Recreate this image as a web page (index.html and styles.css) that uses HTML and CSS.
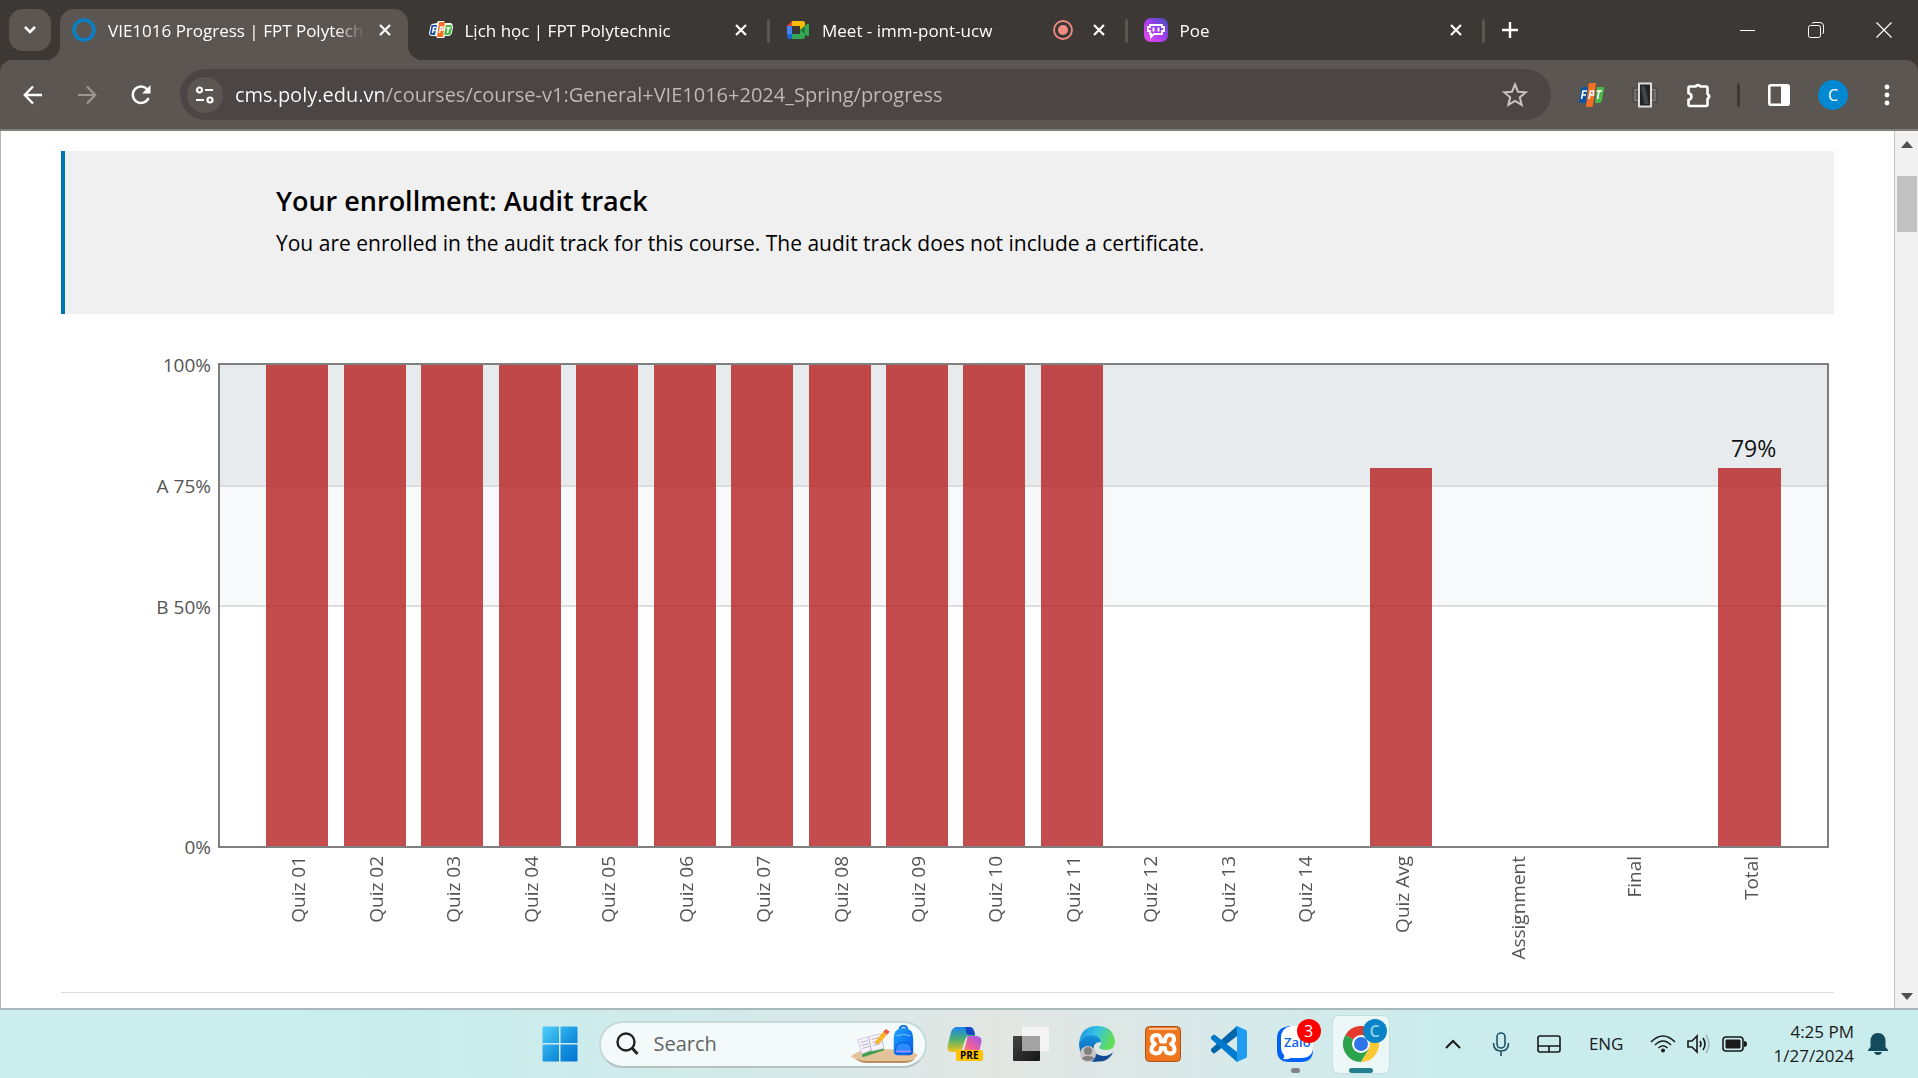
FILE: index.html
```html
<!DOCTYPE html>
<html lang="en">
<head>
<meta charset="utf-8">
<meta name="viewport" content="width=device-width, initial-scale=1">
<title>VIE1016 Progress | FPT Polytechnic</title>
<link rel="stylesheet" href="styles.css">
</head>
<body>
<header class="browser">
  <div class="tabstrip">
    <button class="tab-search" aria-label="Search tabs"><svg width="14" height="10" viewBox="0 0 14 10"><path d="M2 2l5 5 5-5" fill="none" stroke="#fff" stroke-width="2.6"/></svg></button>
    <div class="tabs">
      <div class="tab tab-active">
        <svg class="favicon" viewBox="0 0 24 24"><circle cx="12" cy="12" r="10" fill="none" stroke="#0a7fc2" stroke-width="3.6"/></svg>
        <span class="tab-title">VIE1016 Progress | FPT Polytechnic</span>
        <button class="tab-close" aria-label="Close tab"><svg width="14" height="14" viewBox="0 0 14 14"><path d="M2 2l10 10M12 2L2 12" stroke="#fff" stroke-width="2.2"/></svg></button>
      </div>
      <div class="tab">
        <svg class="favicon" viewBox="0 0 24 24"><path d="M3 6l5-1 1-2h6l1 2h6q2 1 2 4l-1 6q-1 3-3 3h-4l-1 2H8l-1-2H3q-3 0-3-3l1-5q0-3 2-4z" fill="#fff"/><path d="M3 7h5l-2 10H2q-1 0-1-2l1-5q0-3 1-3z" fill="#1b4fa3"/><path d="M10 4h6l-2 15H8z" fill="#f36f21"/><path d="M17 7h5q1 0 1 3l-1 5q0 2-2 2h-5z" fill="#4cb848"/><path d="M3.500 15l1-5.500h2.500M4 12.500h2.500M10.500 15l1-6h2.500v3h-2.500M17.500 10h4M19.500 10l-1 5" fill="none" stroke="#fff" stroke-width="1.300"/></svg>
        <span class="tab-title">Lịch học | FPT Polytechnic</span>
        <button class="tab-close" aria-label="Close tab"><svg width="14" height="14" viewBox="0 0 14 14"><path d="M2 2l10 10M12 2L2 12" stroke="#fff" stroke-width="2.2"/></svg></button>
      </div>
      <div class="tab">
        <svg class="favicon" viewBox="0 0 24 24"><path d="M6 3v5H1z" fill="#ea4335"/><path d="M6 3h11q2 0 2 2v4l-5 4V8H6z" fill="#fbbc04"/><path d="M1 8h5v8H1z" fill="#4285f4"/><path d="M1 16h5v5H3q-2 0-2-2z" fill="#1967d2"/><path d="M6 16h8v-4l5 3v4q0 2-2 2H6z" fill="#34a853"/><path d="M14 12l7-6q2-1 2 1v10q0 2-2 1z" fill="#34a853"/><path d="M14 12l5-4v8z" fill="#188038"/></svg>
        <span class="tab-title">Meet - imm-pont-ucw</span>
        <svg class="recording" viewBox="0 0 20 20" aria-label="Recording"><circle cx="10" cy="10" r="9" fill="none" stroke="#f28b82" stroke-width="1.800"/><circle cx="10" cy="10" r="5" fill="#f28b82"/></svg>
        <button class="tab-close" aria-label="Close tab"><svg width="14" height="14" viewBox="0 0 14 14"><path d="M2 2l10 10M12 2L2 12" stroke="#fff" stroke-width="2.2"/></svg></button>
      </div>
      <div class="tab">
        <svg class="favicon" viewBox="0 0 24 24"><defs><linearGradient id="poe" x1="0" y1="1" x2="1" y2="0"><stop offset="0" stop-color="#f04af0"/><stop offset=".5" stop-color="#a63df0"/><stop offset="1" stop-color="#3b4fb8"/></linearGradient></defs><rect width="24" height="24" rx="7" fill="url(#poe)"/><path d="M6 7h12v2h2v4h-2v3h-8l-3 3v-3H6v-3H4V9h2z" fill="none" stroke="#fff" stroke-width="1.800"/><path d="M9.500 9.500v4M14.500 9.500v4" stroke="#fff" stroke-width="2"/></svg>
        <span class="tab-title">Poe</span>
        <button class="tab-close" aria-label="Close tab"><svg width="14" height="14" viewBox="0 0 14 14"><path d="M2 2l10 10M12 2L2 12" stroke="#fff" stroke-width="2.2"/></svg></button>
      </div>
    </div>
    <button class="new-tab" aria-label="New tab"><svg width="16" height="16" viewBox="0 0 16 16"><path d="M8 0v16M0 8h16" stroke="#fff" stroke-width="2.4"/></svg></button>
    <div class="window-controls">
      <button aria-label="Minimize"><svg width="16" height="16" viewBox="0 0 16 16"><path d="M0 8.500h15" stroke="#fff"/></svg></button>
      <button aria-label="Restore"><svg width="16" height="16" viewBox="0 0 16 16"><rect x=".5" y="3.500" width="12" height="12" rx="2" fill="none" stroke="#fff"/><path d="M4 1.500Q5 .5 6 .5h6q3.500 0 3.500 3.500v6q0 1.500-1 2" fill="none" stroke="#fff"/></svg></button>
      <button aria-label="Close"><svg width="16" height="16" viewBox="0 0 16 16"><path d="M.5.5l15 15M15.500.5l-15 15" stroke="#fff" stroke-width="1.200"/></svg></button>
    </div>
  </div>
  <div class="toolbar">
    <button class="tool" aria-label="Back"><svg width="20" height="20" viewBox="0 0 20 20"><path d="M19 10H2M10 1.500L1.800 10l8.200 8.500" fill="none" stroke="#fff" stroke-width="2.400"/></svg></button>
    <button class="tool" aria-label="Forward"><svg width="20" height="20" viewBox="0 0 20 20"><path d="M1 10h17M10 1.500l8.200 8.500-8.200 8.500" fill="none" stroke="#9b9795" stroke-width="2.200"/></svg></button>
    <button class="tool" aria-label="Reload"><svg width="22" height="20" viewBox="0 0 22 20"><path d="M18.500 13A8.200 8.200 0 1 1 18 5.500" fill="none" stroke="#fff" stroke-width="2.500"/><path d="M20.500 0v8.500H12z" fill="#fff"/></svg></button>
    <div class="omnibox">
      <button class="site-info" aria-label="View site information"><svg width="20" height="18" viewBox="0 0 20 18"><g fill="none" stroke="#fff" stroke-width="2.200"><circle cx="4.500" cy="4" r="2.500"/><path d="M10 4h8M1 14h8"/><circle cx="15" cy="14" r="2.500"/></g></svg></button>
      <input class="url" type="text" aria-label="Address" value="cms.poly.edu.vn/courses/course-v1:General+VIE1016+2024_Spring/progress">
      <button class="star" aria-label="Bookmark this tab"><svg width="26" height="25" viewBox="0 0 26 25"><path d="M13 2.500l3 7.200 7.800.6-6 5 1.900 7.600L13 18.800l-6.700 4.100 1.900-7.600-6-5 7.800-.6z" fill="none" stroke="#c7c4c2" stroke-width="2"/></svg></button>
    </div>
    <button class="tool" aria-label="FPT extension"><svg width="25" height="26" viewBox="0 0 25 26"><path d="M4 5h5L7 21H2q-2 0-2-2L2 8q0-3 2-3z" fill="#0b55a5"/><path d="M11 1h6l-3 22q0 2-2 2H7L9.500 3q0-2 1.500-2z" fill="#f36f21"/><path d="M18 5h6q1 0 1 2l-2 11q-.5 3-3 3h-4z" fill="#4cb848"/><path d="M2.500 17L4 9h4M3.500 13h3.500M10 17l1.500-8h3v4h-4M17.500 9h5.500M20 9l-1.500 8" fill="none" stroke="#fff" stroke-width="1.600"/></svg></button>
    <button class="tool" aria-label="Device extension"><svg width="26" height="26" viewBox="0 0 26 26"><path d="M1 6h24v14H1z" fill="none" stroke="#444"/><path d="M3 7.500h20v11H3z" fill="none" stroke="#8a8a8a"/><rect x="7" y="1.500" width="12" height="23" fill="#222" stroke="#ddd" stroke-width="2"/><path d="M9 4h4l4 18h-5z" fill="#41454a"/></svg></button>
    <button class="tool" aria-label="Extensions"><svg width="26" height="26" viewBox="0 0 26 26"><path d="M4 4.500h5.500a3 3 0 0 1 5 0H20q1.500 0 1.500 1.500V12a3 3 0 0 1 0 5v5.500q0 1.500-1.500 1.500H4q-1.500 0-1.500-1.500V18q3-1 3-3.500t-3-3.500V6q0-1.500 1.500-1.500z" fill="none" stroke="#fff" stroke-width="2.600"/><path d="M9.500 4a2.800 2.800 0 0 1 5 0zM22.500 12a2.800 2.800 0 0 1 0 5z" fill="#fff" stroke="#fff"/></svg></button>
    <span class="divider"></span>
    <button class="tool" aria-label="Side panel"><svg width="22" height="22" viewBox="0 0 22 22"><rect x="1.300" y="1.300" width="19.400" height="19.400" rx="1.500" fill="none" stroke="#fff" stroke-width="2.600"/><path d="M13 1h8v20h-8z" fill="#fff"/></svg></button>
    <button class="tool" aria-label="Profile"><span class="avatar">C</span></button>
    <button class="tool" aria-label="Menu"><svg width="6" height="22" viewBox="0 0 6 22"><g fill="#fff"><circle cx="3" cy="3" r="2.400"/><circle cx="3" cy="11" r="2.400"/><circle cx="3" cy="19" r="2.400"/></g></svg></button>
  </div>
</header>

<div class="viewport">
  <main class="page">
    <section class="notice">
      <h1>Your enrollment: Audit track</h1>
      <p>You are enrolled in the audit track for this course. The audit track does not include a certificate.</p>
    </section>
    <figure class="chart">
      <div class="y-axis"><span>100%</span><span>A 75%</span><span>B 50%</span><span class="y-zero">0%</span></div>
      <div class="plot">
        <div class="bar-slot"><div class="bar" style="height:100%"></div></div>
        <div class="bar-slot"><div class="bar" style="height:100%"></div></div>
        <div class="bar-slot"><div class="bar" style="height:100%"></div></div>
        <div class="bar-slot"><div class="bar" style="height:100%"></div></div>
        <div class="bar-slot"><div class="bar" style="height:100%"></div></div>
        <div class="bar-slot"><div class="bar" style="height:100%"></div></div>
        <div class="bar-slot"><div class="bar" style="height:100%"></div></div>
        <div class="bar-slot"><div class="bar" style="height:100%"></div></div>
        <div class="bar-slot"><div class="bar" style="height:100%"></div></div>
        <div class="bar-slot"><div class="bar" style="height:100%"></div></div>
        <div class="bar-slot"><div class="bar" style="height:100%"></div></div>
        <div class="bar-slot"></div>
        <div class="bar-slot"></div>
        <div class="bar-slot"></div>
        <div class="bar-slot bar-wide"><div class="bar" style="height:78.5%"></div></div>
        <div class="bar-slot bar-wide"></div>
        <div class="bar-slot bar-wide"></div>
        <div class="bar-slot bar-wide"><span class="bar-value">79%</span><div class="bar" style="height:78.5%"></div></div>
      </div>
      <div class="x-axis">
        <span>Quiz 01</span><span>Quiz 02</span><span>Quiz 03</span><span>Quiz 04</span><span>Quiz 05</span><span>Quiz 06</span><span>Quiz 07</span><span>Quiz 08</span><span>Quiz 09</span><span>Quiz 10</span><span>Quiz 11</span><span>Quiz 12</span><span>Quiz 13</span><span>Quiz 14</span><span>Quiz Avg</span><span>Assignment</span><span>Final</span><span>Total</span>
      </div>
    </figure>
    <hr class="rule">
  </main>
  <div class="scrollbar">
    <svg width="12" height="7" viewBox="0 0 12 7"><path d="M6 0l6 7H0z" fill="#505050"/></svg>
    <div class="track"><div class="thumb"></div></div>
    <svg width="12" height="7" viewBox="0 0 12 7"><path d="M0 0h12L6 7z" fill="#505050"/></svg>
  </div>
</div>

<footer class="taskbar">
  <nav class="apps">
    <button class="app" aria-label="Start"><svg width="36" height="36" viewBox="0 0 36 36"><defs><linearGradient id="win" x1="0" y1="0" x2="1" y2="1" ><stop offset="0" stop-color="#4fd0fb"/><stop offset=".6" stop-color="#1590dd"/><stop offset="1" stop-color="#0073cf"/></linearGradient></defs><path d="M1.500.5H17v16.500H.5V1.500q0-1 1-1zM18.500.5H34.500q1 0 1 1V17h-17zM.5 18.500H17v17H1.500q-1 0-1-1zM18.500 18.500h17v16q0 1-1 1h-16z" fill="url(#win)"/></svg></button>
    <div class="search">
      <svg width="24" height="24" viewBox="0 0 24 24"><circle cx="10" cy="10" r="8.500" fill="none" stroke="#222" stroke-width="2.400"/><path d="M16 16l5.500 6" stroke="#222" stroke-width="3"/></svg>
      <input type="text" placeholder="Search" aria-label="Search">
      <svg width="68" height="39" viewBox="0 0 70 40"><defs><linearGradient id="bag" x1="0" y1="0" x2="1" y2="1"><stop offset="0" stop-color="#23a4ff"/><stop offset="1" stop-color="#0059e8"/></linearGradient></defs><path d="M0 32q8-6 18-7h38q8 2 13 6-4 6-14 6H14Q5 37 0 32z" fill="#e4c39b"/><path d="M5 35q6 2 12 2h36q8 0 13-2-4 4-12 4H17q-8 0-12-4z" fill="#b98f62"/><path d="M8 16l23-6 3 16-22 7z" fill="#3ca04a"/><path d="M7 15l11-3 3 14-10 4zM18 12l12-3 4 15-13 3z" fill="#f6f2fa" stroke="#b9aecb" stroke-width=".6"/><path d="M10 18l7-2M11 21l7-2M12 24l7-2M21 15l7-2M22 18l7-2M23 21l7-2" stroke="#aaa1bb" stroke-width=".8"/><path d="M25 17l8-10 4 3-8 9-4 1z" fill="#f9b52c"/><path d="M33 7l3-3 4 3-3 3z" fill="#f15b45"/><path d="M50 5q0-4 4-4t4 4" fill="none" stroke="#0b72dc" stroke-width="2"/><path d="M44 14q0-11 10-11t10 11v13q0 4-4 4H48q-4 0-4-4z" fill="url(#bag)"/><path d="M46 25q0-7 8-7t8 7v4q-8 2-16 0z" fill="#2b8bff" stroke="#0750cc"/><path d="M46 27h16" stroke="#a789ff" stroke-width="1.500"/><path d="M47 11q7-3 14 0" fill="none" stroke="#7ecaff"/></svg>
    </div>
    <button class="app" aria-label="Copilot"><svg width="36" height="36" viewBox="0 0 36 36"><defs><linearGradient id="cpa" x1="0" y1="0" x2="0" y2="1"><stop offset="0" stop-color="#1685f0"/><stop offset=".5" stop-color="#4fb06f"/><stop offset="1" stop-color="#f7c51a"/></linearGradient><linearGradient id="cpb" x1="1" y1="0" x2="0" y2="1"><stop offset="0" stop-color="#9b57f0"/><stop offset=".6" stop-color="#f0609a"/><stop offset="1" stop-color="#ff9a50"/></linearGradient></defs><path d="M10 1h12q4 0 5 5l1 4h-6q-3 0-4 4l-3 9q-1 3-4 3H5q-6 0-4-8L4 6q2-5 6-5z" fill="url(#cpa)"/><path d="M18 1h5q4 0 5 8h-5q-4 0-4-4z" fill="#1448c4"/><path d="M22 10h8q6 1 4 8l-2 8H14q3-1 4-5l2-8q0-3 2-3z" fill="url(#cpb)"/><rect x="9" y="24" width="27" height="11" rx="2" fill="#ffc400"/><text class="pre" x="13" y="33">PRE</text></svg></button>
    <button class="app" aria-label="Task view"><svg width="36" height="36" viewBox="0 0 36 36"><defs><linearGradient id="tv" x1="0" y1="0" x2="1" y2="1"><stop offset="0" stop-color="#444"/><stop offset="1" stop-color="#151515"/></linearGradient></defs><rect y="10" width="27" height="25" rx="1" fill="url(#tv)"/><path d="M9 1h27v24H9z" fill="#f4f4f4"/><path d="M9 10h18v15H9z" fill="#a3a3a3"/></svg></button>
    <button class="app" aria-label="Edge"><svg width="36" height="36" viewBox="0 0 36 36"><defs><linearGradient id="ea" x1="0" y1="0" x2="1" y2=".3"><stop offset="0" stop-color="#1b8ed8"/><stop offset=".5" stop-color="#35c1e8"/><stop offset="1" stop-color="#62de58"/></linearGradient><linearGradient id="eb" x1="0" y1="0" x2="0" y2="1"><stop offset="0" stop-color="#1593dc"/><stop offset="1" stop-color="#0b57a8"/></linearGradient></defs><path d="M0 17Q2 0 18 0t18 15q0 9-9 9-7 0-7-3 2-2 2-4 0-7-9-8Q4 9 0 17z" fill="url(#ea)"/><path d="M0 17Q4 9 12 9q9 0 10 7-8 0-8 8 1 9 11 9-4 3-9 3Q0 34 0 17z" fill="url(#eb)"/><path d="M15 18q-2 9 5 11 8 3 14-3-2 6-9 9-10 2-13-6-1-6 3-11z" fill="#124c92"/><circle cx="9" cy="28" r="8" fill="#c9c7c5"/><circle cx="9" cy="25" r="4" fill="#85817e"/><path d="M3 33q0-3 6-3t6 3q-6 4-12 0z" fill="#85817e"/></svg></button>
    <button class="app" aria-label="XAMPP"><svg width="36" height="36" viewBox="0 0 36 36"><rect x=".5" y=".5" width="35" height="35" rx="4" fill="#f0751f" stroke="#a75319"/><path d="M4 3h28" stroke="#ffc297" stroke-width="2"/><path d="M16 15.500q0-6.500-4.500-6.500Q7 9 7 13q0 3.500 3 5-3.500 2-3.500 5.500T11 27.500q5 0 5-5.500h4q0 5.500 5 5.500 4.500 0 4.500-4T26 18q3-1.500 3-5 0-4-4.500-4T20 15.500z" fill="none" stroke="#fff" stroke-width="4" stroke-linejoin="round"/></svg></button>
    <button class="app" aria-label="Visual Studio Code"><svg width="36" height="36" viewBox="0 0 36 36"><path d="M26 0v10L4 27q-1 1-2 0l-2-2q-1-1 0-2z" fill="#0065a9"/><path d="M26 36V26L4 9Q3 8 2 9l-2 2q-1 1 0 2z" fill="#007acc"/><path d="M26 0l9 4q1 1 1 2v24q0 1-1 2l-9 4q-1 0-2-2 2 1 2-1V3q0-2-2-1 1-2 2-2z" fill="#1f9cf0"/></svg></button>
    <button class="app" aria-label="Zalo"><svg width="36" height="36" viewBox="0 0 36 36"><path d="M13 0h12q11 0 11 12v12q0 12-12 12H12Q0 36 0 24V12Q0 1 13 0z" fill="#0062f5"/><path d="M14 0h11q11 0 11 12v9q0 11-12 11H14q-4 2-8 1 2-2 1-4-3-3-3-8v-9Q4 2 14 0z" fill="#fff"/><text class="zalo" x="7" y="21">Zalo</text></svg><span class="badge badge-red">3</span><span class="running"></span></button>
    <button class="app app-current" aria-label="Chrome"><svg width="36" height="36" viewBox="0 0 36 36"><path d="M18 18L2.400 9A18 18 0 0 1 33.600 9z" fill="#e33b2e"/><path d="M18 18L2.400 9A18 18 0 0 0 18 36l8-13z" fill="#2ba24c"/><path d="M18 9h15.600A18 18 0 0 1 18 36l8-13z" fill="#fcc934"/><circle cx="18" cy="18" r="9" fill="#fff"/><circle cx="18" cy="18" r="7" fill="#2f74e8"/></svg><span class="badge badge-blue">C</span><span class="running running-wide"></span></button>
  </nav>
  <div class="tray">
    <button aria-label="Show hidden icons" class="tray-item tray-chevron"><svg width="16" height="10" viewBox="0 0 16 10"><path d="M1 9l7-7 7 7" fill="none" stroke="#1a1a1a" stroke-width="2"/></svg></button>
    <button aria-label="Microphone" class="tray-item tray-mic"><svg width="18" height="24" viewBox="0 0 18 24"><g fill="none" stroke="#1d5365" stroke-width="1.600"><rect x="5" y="1" width="8" height="15" rx="4"/><path d="M1.500 11q0 8 7.500 8t7.500-8M9 19v5"/></g></svg></button>
    <button aria-label="Touchpad" class="tray-item tray-pad"><svg width="24" height="18" viewBox="0 0 24 18"><path d="M3 1h18q2 0 2 2v12q0 2-2 2H3q-2 0-2-2V3q0-2 2-2zM1 11h22M12 11v6" fill="none" stroke="#1a1a1a" stroke-width="1.600"/></svg></button>
    <button class="tray-item tray-lang">ENG</button>
    <button aria-label="Network, volume, battery" class="tray-item tray-status">
      <svg width="26" height="18" viewBox="0 0 26 18"><g fill="none" stroke="#1a1a1a" stroke-width="1.600"><path d="M1 7q12-12 24 0M5 10q8-8 16 0M8.500 13q4.500-4.500 9 0"/></g><circle cx="13" cy="15.500" r="2" fill="#1a1a1a"/></svg>
      <svg width="24" height="20" viewBox="0 0 24 20"><g fill="none" stroke="#1a1a1a" stroke-width="1.600"><path d="M1 7h4l5-5v16l-5-5H1zM13 7q2 3 0 6M16 4q4 6 0 12"/><path d="M19 1q6 9 0 18" stroke="#9dbcbe"/></g></svg>
      <svg width="25" height="16" viewBox="0 0 25 16"><rect x="1" y="1" width="20" height="14" rx="3" fill="none" stroke="#1a1a1a" stroke-width="1.600"/><rect x="3.500" y="3.500" width="15" height="9" rx="1" fill="#1a1a1a"/><path d="M22 5q3 0 3 3t-3 3z" fill="#1a1a1a"/></svg>
    </button>
    <button class="tray-item tray-clock"><span>4:25 PM</span><span>1/27/2024</span></button>
    <button aria-label="Notifications" class="tray-item tray-bell"><svg width="20" height="24" viewBox="0 0 20 24"><path d="M10 1q7 0 7.500 8v6l2.500 3v1H0v-1l2.500-3V9Q3 1 10 1zM6 20h8q-1 3-4 3t-4-3z" fill="#134a5c"/></svg></button>
  </div>
</footer>
</body>
</html>
```
FILE: styles.css
```css
* { box-sizing: border-box; }

body {
  margin: 0;
  min-height: 100vh;
  display: flex;
  flex-direction: column;
  background: #fff;
  color: #000;
  font-family: "Open Sans", "Noto Sans", sans-serif;
}

button {
  padding: 0;
  border: 0;
  background: none;
  color: inherit;
  font: inherit;
}

input {
  padding: 0;
  border: 0;
  outline: 0;
  background: none;
  font: inherit;
}

svg { display: block; flex: none; }

/* Browser window */
.browser { background: #3c3836; color: #fff; }

.tabstrip {
  display: flex;
  height: 60px;
  align-items: stretch;
}

.tab-search {
  flex: none;
  display: grid;
  place-items: center;
  width: 42px;
  height: 42px;
  margin: 9px 5px 0 9px;
  border-radius: 14px;
  background: #5c5653;
}

.tabs { display: flex; flex: 0 1 1429px; min-width: 0; }

.tab {
  position: relative;
  display: flex;
  flex: 1 1 0;
  min-width: 0;
  align-items: center;
  padding: 9px 16px 9px 16px;
  border-right: 3px solid transparent;
}

.tab:not(.tab-active)::after {
  content: "";
  position: absolute;
  right: -3px;
  top: 19px;
  width: 3px;
  height: 24px;
  border-radius: 2px;
  background: #5c5653;
}

.tab-active {
  margin: 9px 5px 0 4px;
  padding: 0 13px 9px 12px;
  border-right: 0;
  border-radius: 14px 14px 0 0;
  background: #5c5653;
}

.tab-active::before,
.tab-active::after {
  content: "";
  position: absolute;
  bottom: 0;
  width: 14px;
  height: 14px;
}

.tab-active::before {
  left: -14px;
  background: radial-gradient(circle at 0 0, transparent 14px, #5c5653 14px);
}

.tab-active::after {
  right: -14px;
  background: radial-gradient(circle at 100% 0, transparent 14px, #5c5653 14px);
}

.favicon { width: 24px; height: 24px; }

.tab-title {
  flex: 1;
  min-width: 0;
  margin: 0 10px 0 12px;
  padding-top: 2px;
  overflow: hidden;
  font-size: 17px;
  line-height: 24px;
  white-space: nowrap;
  mask-image: linear-gradient(90deg, #000 calc(100% - 30px), transparent);
}

.recording { width: 20px; height: 20px; margin-right: 16px; }

.tab-close {
  display: grid;
  place-items: center;
  width: 20px;
  height: 20px;
}

.new-tab {
  display: grid;
  place-items: center;
  width: 50px;
}

.window-controls { display: flex; margin-left: auto; }

.window-controls button {
  display: grid;
  place-items: center;
  width: 68px;
}

.toolbar {
  display: flex;
  align-items: center;
  height: 71px;
  padding: 0 4px 0 6px;
  border-bottom: 2px solid #827e7b;
  border-radius: 12px 12px 0 0;
  background: #5c5653;
}

.tool {
  display: grid;
  place-items: center;
  flex: none;
  width: 54px;
  height: 54px;
}

.omnibox {
  display: flex;
  flex: 1;
  align-items: center;
  height: 51px;
  margin: 0 13px 0 12px;
  padding: 0 23px 0 7px;
  border-radius: 26px;
  background: #4b4645;
}

.site-info {
  display: grid;
  place-items: center;
  flex: none;
  width: 36px;
  height: 36px;
  border-radius: 50%;
  background: #5c5653;
}

.url {
  flex: 1;
  min-width: 0;
  margin-left: 12px;
  height: 30px;
  font-size: 20px;
  line-height: 30px;
  color: #fff;
  background: linear-gradient(90deg, #fff 148px, #bfbbb9 148px);
  background-clip: text;
  -webkit-text-fill-color: transparent;
}

.divider {
  width: 3px;
  height: 24px;
  margin: 0 12px 0 11px;
  border-radius: 2px;
  background: #3c3836;
}

.avatar {
  display: grid;
  place-items: center;
  width: 30px;
  height: 30px;
  border-radius: 50%;
  background: #0288d1;
  font-size: 16px;
  line-height: 30px;
}

/* Page */
.viewport {
  display: flex;
  flex: 1;
  border-left: 1px solid #b5b5b5;
  border-bottom: 2px solid #a9b8b8;
}

.page { flex: 1; padding: 20px 60px 0; }

.notice {
  padding: 32px 40px 53px 211px;
  border-left: 4px solid #0075b4;
  background: #f0f0f0;
}

.notice h1 {
  margin: 0 0 6px;
  font-size: 27px;
  font-weight: 600;
  line-height: 36px;
}

.notice p {
  margin: 0;
  font-size: 21px;
  line-height: 36px;
}

.chart {
  --columns: .5fr repeat(14, minmax(0, 1fr)) repeat(4, minmax(0, 1.5fr)) .25fr;
  display: grid;
  grid-template-columns: 150px 1fr;
  column-gap: 7px;
  margin: 49px 5px 0 0;
  color: #545454;
  font-size: 19px;
  line-height: 26px;
}

.y-axis {
  display: grid;
  grid-template-rows: 1fr 1fr 2fr;
  height: 484px;
  text-align: right;
}

.y-axis span { height: 26px; margin-top: -11px; }

.y-axis .y-zero { height: 13px; margin-top: -13px; }

.plot {
  display: grid;
  grid-template-columns: var(--columns);
  height: 485px;
  border: 2px solid #7f7f7f;
  background:
    linear-gradient(#d9dbdd, #d9dbdd) 0 25% / 100% 2px no-repeat,
    linear-gradient(#dedede, #dedede) 0 50% / 100% 2px no-repeat,
    linear-gradient(#e8ebee 0 25%, #f8f9fb 25% 50%, #fff 50%);
}

.bar-slot {
  display: flex;
  flex-direction: column;
  justify-content: flex-end;
  padding: 0 10%;
  min-height: 0;
}

.bar-slot:first-child { grid-column: 2; }

.bar-wide { padding: 0 23%; }

.bar { flex: none; background: rgba(181, 31, 31, .8); }

.bar-value {
  padding: 0 0 4px 8px;
  color: #111;
  font-size: 23px;
  line-height: 32px;
  text-align: center;
}

.x-axis {
  grid-column: 2;
  display: grid;
  grid-template-columns: var(--columns);
  align-items: start;
  justify-items: center;
  height: 144px;
  padding: 8px 1px 0 3px;
}

.x-axis span {
  writing-mode: vertical-rl;
  transform: rotate(180deg);
  white-space: nowrap;
}

.x-axis span:first-child { grid-column: 2; }

.rule {
  margin: 0;
  border: 0;
  border-top: 1px solid #dcdcdc;
}

.scrollbar {
  display: flex;
  flex-direction: column;
  align-items: center;
  width: 24px;
  padding: 10px 1px 8px 2px;
  border-left: 1px solid #c4c4c4;
  background: #f1f1f1;
}

.track { flex: 1; width: 100%; padding-top: 28px; }

.thumb { height: 56px; background: #c1c1c1; }

/* Taskbar */
.taskbar {
  display: grid;
  grid-template-columns: 1fr auto 1fr;
  align-items: center;
  height: 68px;
  padding-left: 2px;
  background: linear-gradient(90deg, #cdeeee 0, #c9eded 22%, #d3eaea 38%, #e2e6e3 52%, #dae8e8 62%, #cbeced 75%, #c9eced 100%);
  color: #1a1a1a;
}

.apps {
  grid-column: 2;
  display: flex;
  align-items: center;
  gap: 10px;
}

.app {
  position: relative;
  display: grid;
  place-items: center;
  width: 56px;
  height: 57px;
  border-radius: 6px;
}

.app-current {
  background: rgba(255, 255, 255, .6);
  box-shadow: 0 0 0 1px rgba(0, 0, 0, .05);
}

.badge {
  position: absolute;
  top: 3px;
  right: 2px;
  width: 24px;
  height: 24px;
  border-radius: 50%;
  color: #fff;
  font-size: 16px;
  line-height: 24px;
  text-align: center;
}

.badge-red { background: #f00; }

.badge-blue { background: #0a84c6; color: #8fd0ef; font-weight: 600; }

.running {
  position: absolute;
  bottom: 0;
  left: 24px;
  width: 9px;
  height: 5px;
  border-radius: 3px;
  background: #7d8587;
}

.running-wide { left: 16px; width: 24px; background: #24808f; }

.pre { font: 700 10px "Open Sans", sans-serif; }

.zalo { font: 600 13px "Open Sans", sans-serif; fill: #0b62e8; }

.search {
  display: flex;
  align-items: center;
  width: 328px;
  height: 47px;
  padding: 0 6px 0 15px;
  margin-left: 1px;
  border: 2px solid #c5d9d9;
  border-bottom-color: #b3c1c1;
  border-radius: 24px;
  background: #f4fafa;
}

.search input {
  flex: 1;
  min-width: 0;
  margin-left: 14px;
  font-size: 20px;
  line-height: 28px;
}

.search input::placeholder { color: #5f6465; opacity: 1; }

.tray {
  display: flex;
  align-items: center;
  justify-content: flex-end;
  padding-right: 30px;
  font-size: 17px;
  line-height: 24px;
}

.tray-item { flex: none; }

.tray-mic { margin-left: 31px; }

.tray-pad { margin-left: 27px; }

.tray-lang { margin-left: 28px; }

.tray-status { display: flex; align-items: center; gap: 11px; margin-left: 27px; }

.tray-clock {
  display: grid;
  margin-left: 26px;
  text-align: right;
}

.tray-bell { margin-left: 14px; }
```
